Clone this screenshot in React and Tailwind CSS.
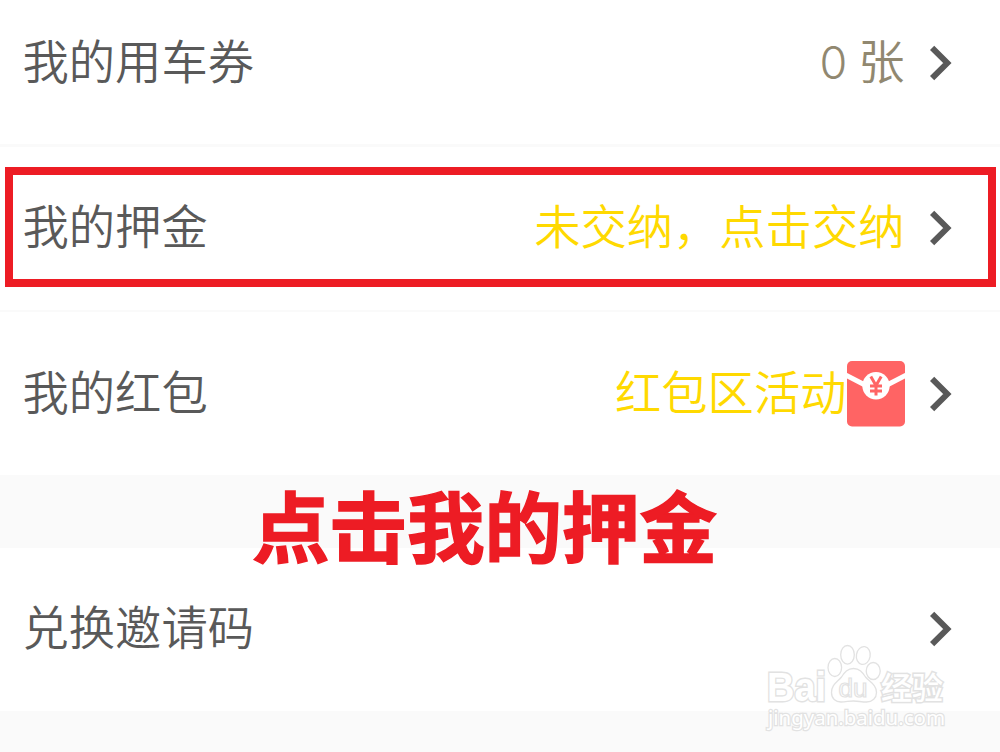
const rows = [
  { label: '我的用车券', count: 0, value: '张', tone: 'text-[#918870]' },
  { label: '我的押金', value: '未交纳，点击交纳', tone: 'text-[#ffd900]', marked: true },
  { label: '我的红包', value: '红包区活动', tone: 'text-[#ffd900]', packet: true },
]

function Chevron() {
  return (
    <svg className="w-[22px] h-[36px] ml-[25px] flex-shrink-0" viewBox="0 0 22 36" fill="none">
      <path d="M2.1 2.8 17.3 18 2.1 33.2" stroke="#595959" strokeWidth="6" />
    </svg>
  )
}

function RedPacket() {
  return (
    <svg className="w-[58px] h-[66px] flex-shrink-0" viewBox="0 0 58 66" fill="none">
      <rect width="58" height="65.4" rx="5" fill="#ff6464" />
      <path d="M-1 14.2 18 24M59 14.2 40 24" stroke="#fff" strokeWidth="5" />
      <circle cx="29" cy="24.8" r="13.7" fill="#fff" />
      <path d="M23.8 15.5 29 24.5 34.2 15.5M29 24v10.5M23 25h12M23 30h12" stroke="#ff6464" strokeWidth="3" />
    </svg>
  )
}

function Row({ label, count, value, tone, marked, packet }) {
  return (
    <div className="relative flex items-center h-[163px] pl-[22.5px] pr-[48px] bg-white flex-shrink-0">
      <span className="flex-1 pb-[7px] text-[#595959]">{label}</span>
      {count !== undefined && (
        <span className={`${tone} mr-[11px] font-['Inter',sans-serif] font-[350] text-[45px]`}>{count}</span>
      )}
      {value && <span className={`${tone} pb-[7px] mr-[0.5px]`}>{value}</span>}
      {packet && <RedPacket />}
      <Chevron />
      {marked && (
        <div className="absolute left-[5px] right-[4px] top-[20px] h-[120px] border-8 border-[#ed1c24]" />
      )}
    </div>
  )
}

function Watermark() {
  return (
    <svg
      className="absolute left-[760px] top-[640px] w-[200px] h-[100px]"
      viewBox="0 0 200 100"
      fill="#fff"
      stroke="#e2e2e2"
      strokeWidth="1.3"
    >
      <text x="7" y="60.5" fontSize="40" fontFamily="Liberation Sans" fontWeight="700" paintOrder="stroke" strokeWidth="2.8" textLength="59" lengthAdjust="spacingAndGlyphs">Bai</text>
      <text x="121" y="58.500" fontSize="31" fontFamily="Noto Sans CJK SC" fontWeight="500" paintOrder="stroke" strokeWidth="3" textLength="62" lengthAdjust="spacingAndGlyphs">经验</text>
      <ellipse cx="74.8" cy="27.5" rx="6.8" ry="9" />
      <ellipse cx="87.5" cy="14.8" rx="6.8" ry="9.3" />
      <ellipse cx="103.3" cy="15.5" rx="6.9" ry="9" transform="rotate(10 103.3 15.5)" />
      <ellipse cx="113.2" cy="31" rx="7" ry="8.5" />
      <path d="M93.5 28.5c-6 0-9 4-12 8.500-4 5-10 7.500-10 15.500 0 6 4 9.500 9.500 9.500 5 0 8-1 12.500-1s8 1 13 1c6 0 10-4 10-9.500 0-8-7-10.500-11-15.500-3-4.500-6-8.500-12-8.500z" />
      <text x="78.5" y="56.5" fontSize="25" fontFamily="Liberation Sans" strokeWidth="1.2" textLength="29" lengthAdjust="spacingAndGlyphs">du</text>
      <text
        x="8" y="84.500" fontSize="20" fontFamily="Noto Sans" fontWeight="400"
        paintOrder="stroke" strokeWidth="2.4" textLength="177" lengthAdjust="spacingAndGlyphs"
      >
        jingyan.baidu.com
      </text>
    </svg>
  )
}

export default function App() {
  return (
    <div className="relative w-[1000px] h-[752px] overflow-hidden bg-[#fafafa] font-['Noto_Sans_CJK_SC',sans-serif] font-[350] text-[46.3px] leading-none">
      <div className="-mt-[19px] flex flex-col gap-[2.5px]">
        {rows.map((row) => (
          <Row key={row.label} {...row} />
        ))}
      </div>
      <div className="mt-[72.5px]">
        <Row label="兑换邀请码" />
      </div>

      {/* Caption laid over the gap between the two groups */}
      <p className="absolute left-[252px] top-[485px] text-[77.5px] font-bold text-[#ed1c24] whitespace-nowrap [-webkit-text-stroke:1.5px_#ed1c24]">
        点击我的押金
      </p>
      <Watermark />
    </div>
  )
}
